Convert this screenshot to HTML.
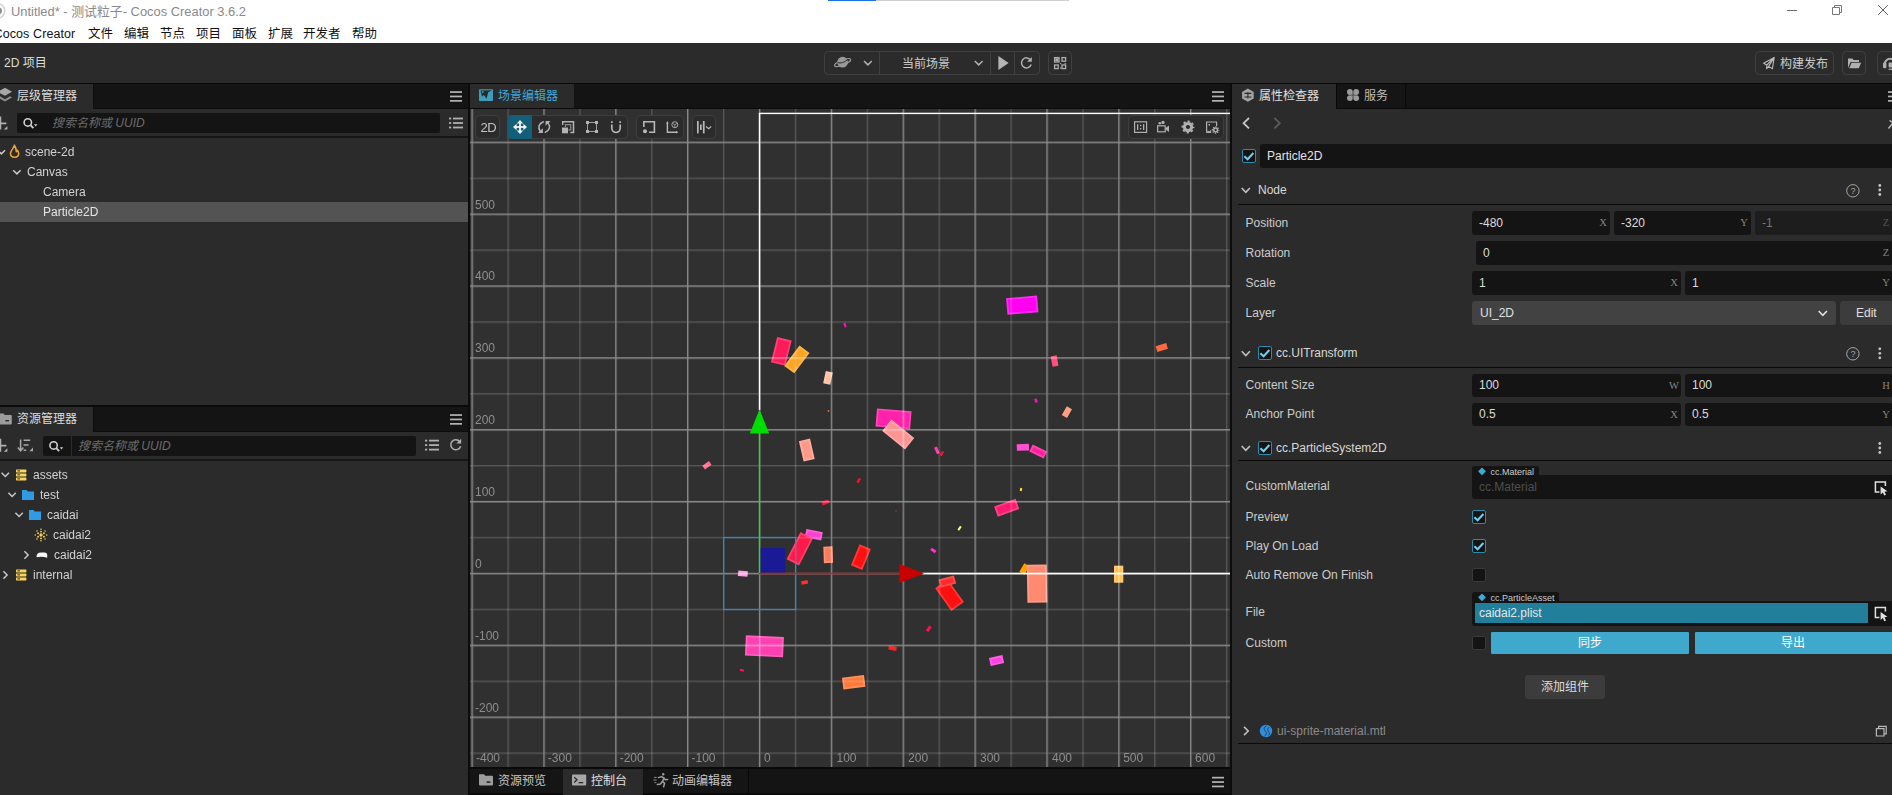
<!DOCTYPE html>
<html lang="zh-CN">
<head>
<meta charset="utf-8">
<title>Untitled* - 测试粒子- Cocos Creator 3.6.2</title>
<style>
html,body{margin:0;padding:0;background:#2b2b2b;}
body{width:1892px;height:795px;overflow:hidden;position:relative;font-family:"Liberation Sans","Noto Sans CJK SC",sans-serif;font-size:12px;color:#ccc;}
#app{position:absolute;left:0;top:0;width:1892px;height:795px;overflow:hidden;background:#2b2b2b;}
.abs{position:absolute;}
.t{position:absolute;white-space:nowrap;line-height:16px;height:16px;}
svg{position:absolute;overflow:visible;}
/* title + menu */
#titlebar{left:0;top:0;width:1892px;height:43px;background:#fff;}
#title{left:11px;top:4px;font-size:12.9px;color:#8a8a8a;}
.menu{top:26px;font-size:12.5px;color:#111;}
/* generic */
.tabbar{background:#141414;height:24px;}
.tab{background:#2b2b2b;height:24px;top:0;}
.inp{background:#141414;border-radius:2px;}
.row{position:absolute;left:0;height:20px;}
.lbl{position:absolute;white-space:nowrap;line-height:16px;color:#ccc;font-size:12px;}
.num{position:absolute;background:#141414;border-radius:2px;height:20px;}
.num span{position:absolute;left:7px;top:2px;line-height:16px;color:#ddd;}
.num i{position:absolute;right:3px;top:3px;font-style:normal;font-family:"Liberation Mono",monospace;font-size:11px;line-height:14px;color:#777;}
.cb{position:absolute;width:12px;height:12px;border:1px solid #227f9b;border-radius:2px;background:#141414;}
.cb0{position:absolute;width:12px;height:12px;border:1px solid #141414;border-radius:2px;background:#141414;}
.g,#scenesvg{will-change:transform;}
.hr{position:absolute;height:1px;background:#0a0a0a;}
.ax{position:absolute;white-space:nowrap;font-family:"Liberation Serif",serif;font-size:10.5px;color:#858585;width:10px;text-align:center;}
</style>
</head>
<body>
<div id="app">

<!-- ===== TITLE + MENU ===== -->
<div id="titlebar" class="abs">
  <div class="abs" style="left:828px;top:0;width:48px;height:1px;background:#1a73e8"></div>
  <div class="abs" style="left:876px;top:0;width:193px;height:1px;background:#d0d0d0"></div>
  <svg width="120" height="24" viewBox="1772 0 120 24" style="left:1772px;top:0">
    <path d="M1787,10.5 h10" stroke="#707070" stroke-width="1" fill="none"/>
    <path d="M1832.5,7.5 h7 v7 h-7z M1834.5,7.5 v-2 h7 v7 h-2" stroke="#787878" stroke-width="1" fill="none"/>
    <path d="M1878.2,5.2 l9.6,9.6 M1887.8,5.2 l-9.6,9.6" stroke="#606060" stroke-width="1" fill="none"/>
  </svg>
  <svg width="12" height="20" viewBox="0 0 12 20" style="left:0;top:0"><circle cx="-2.6" cy="10.8" r="7.4" fill="none" stroke="#d6d6d6" stroke-width="1.6"/><circle cx="-1.6" cy="10.8" r="3.6" fill="#8c8c8c"/></svg>
  <div id="title" class="t">Untitled* - 测试粒子- Cocos Creator 3.6.2</div>
  <div class="t menu" style="left:-6.5px;letter-spacing:0.1px">Cocos Creator</div>
  <div class="t menu" style="left:88px">文件</div>
  <div class="t menu" style="left:124px">编辑</div>
  <div class="t menu" style="left:160px">节点</div>
  <div class="t menu" style="left:196px">项目</div>
  <div class="t menu" style="left:232px">面板</div>
  <div class="t menu" style="left:268px">扩展</div>
  <div class="t menu" style="left:303px">开发者</div>
  <div class="t menu" style="left:352px">帮助</div>
</div>

<!-- ===== TOOLBAR ===== -->
<div id="toolbar" class="abs" style="left:0;top:43px;width:1892px;height:40px;background:#2b2b2b">
  <div class="t" style="left:4px;top:12px;font-size:12px;color:#ddd">2D 项目</div>
  <svg width="1892" height="40" viewBox="0 43 1892 40" style="left:0;top:0">
  <g fill="none" stroke="#404040" stroke-width="1">
    <rect x="824.5" y="51.5" width="215" height="23" rx="4"/>
    <path d="M879.5,52 v22 M990.5,52 v22 M1014.5,52 v22"/>
    <rect x="1048.5" y="51.5" width="23" height="23" rx="4"/>
    <rect x="1755.5" y="51.5" width="78" height="23" rx="4"/>
    <rect x="1842.5" y="51.5" width="23" height="23" rx="4"/>
    <rect x="1877.5" y="51.5" width="23" height="23" rx="4"/>
  </g>
  <!-- planet -->
  <circle cx="842.6" cy="62.2" r="5.4" fill="#9a9a9a"/>
  <ellipse cx="842.6" cy="62.6" rx="8.6" ry="2.3" fill="none" stroke="#9a9a9a" stroke-width="1.3" transform="rotate(-22 842.6 62.6)"/>
  <path d="M837.5,62.6 q5,1.6 10.4,-3.2" fill="none" stroke="#2b2b2b" stroke-width="1" />
  <!-- chevrons -->
  <path d="M864,61 l3.9,3.9 l3.9,-3.9 M974.8,61 l3.9,3.9 l3.9,-3.9" fill="none" stroke="#b0b0b0" stroke-width="1.5"/>
  <!-- play -->
  <polygon points="998.4,56 1008.6,63 998.4,70" fill="#b4b4b4"/>
  <!-- refresh -->
  <path d="M1030.6,60 a5,5 0 1 0 0.6,4.6" fill="none" stroke="#b0b0b0" stroke-width="1.5"/>
  <polygon points="1031.8,57 1031.8,61.8 1027,61.8" fill="#b0b0b0"/>
  <!-- qr -->
  <g fill="none" stroke="#b0b0b0" stroke-width="1.3">
    <rect x="1054.6" y="57.6" width="4.4" height="4.4"/><rect x="1062" y="57.6" width="3.6" height="3.6"/>
    <rect x="1054.6" y="65" width="3.6" height="3.6"/><rect x="1062" y="65" width="3.6" height="3.6"/>
  </g>
  <g fill="#b0b0b0"><rect x="1055.4" y="58.4" width="2.8" height="2.8"/><rect x="1060" y="63" width="1.2" height="1.2"/><rect x="1064.6" y="63" width="1.2" height="1.2"/><rect x="1060" y="67.4" width="1.2" height="1.2"/></g>
  <!-- paper plane -->
  <path d="M1763.6,63.2 L1774.2,57.4 L1772.4,68.8 L1768.6,66.4 L1766.6,68.6 L1766.8,65 Z M1766.8,65 L1774.2,57.4 M1768.6,66.4 L1774.2,57.4" fill="none" stroke="#b8b8b8" stroke-width="1.1" stroke-linejoin="round"/>
  <!-- folder -->
  <path d="M1848,68 v-9.4 h4.4 l1.2,1.4 h5.4 v2 h-8.4 l-2.6,6z" fill="#b0b0b0"/>
  <path d="M1849.2,68.2 l2.4,-5.4 h9.6 l-2.4,5.4z" fill="#b0b0b0"/>
  <!-- headset -->
  <path d="M1884.6,64.4 a5.6,5.6 0 0 1 11.2,0" fill="none" stroke="#b0b0b0" stroke-width="2"/>
  <rect x="1883" y="62.6" width="3.4" height="5.6" rx="1.2" fill="#b0b0b0"/>
  <rect x="1888.6" y="62.6" width="4" height="5" rx="1" fill="#b0b0b0"/>
  <rect x="1888.6" y="68.6" width="4" height="1.3" fill="#b0b0b0"/>
  </svg>
  <div class="t" style="left:902px;top:13px;font-size:12px;color:#ccc">当前场景</div>
  <div class="t" style="left:1780px;top:13px;font-size:12px;color:#ccc">构建发布</div>
</div>
<div class="abs" style="left:0;top:83px;width:1892px;height:1px;background:#080808"></div>

<!-- ===== LEFT: HIERARCHY ===== -->
<div id="hier" class="abs" style="left:0;top:84px;width:468px;height:321px;background:#2b2b2b">
  <div class="abs tabbar" style="left:0;top:0;width:468px"></div><div class="abs" style="left:93px;top:24px;width:375px;height:1px;background:#0d0d0d"></div><div class="abs" style="left:93px;top:0;width:1px;height:25px;background:#0d0d0d"></div>
  <div class="abs tab" style="left:0;width:93px"></div>
  <div class="t" style="left:17px;top:4px;font-size:12px;color:#ddd">层级管理器</div>
  <svg width="468" height="140" viewBox="0 84 468 140" style="left:0;top:0">
    <!-- layers icon -->
    <path d="M-2.5,91.8 l7.5,-4 l7,4 l-7,4z" fill="#a6a6a6"/>
    <path d="M-2.5,97.4 l2.2,-1.2 l5.3,3 l5,-3 l2,1.2 l-7,4.2z" fill="#8c8c8c"/>
    <!-- hamburger -->
    <g fill="#b4b4b4"><rect x="450" y="91.2" width="12" height="1.7"/><rect x="450" y="95.6" width="12" height="1.7"/><rect x="450" y="100" width="12" height="1.7"/></g>
    <!-- plus -->
    <path d="M-4,123.4 h10.4 M0.4,116.6 v13" stroke="#b0b0b0" stroke-width="1.7" fill="none"/>
    <polygon points="7.4,126 7.4,129.6 3.8,129.6" fill="#b0b0b0"/>
    <!-- list icon -->
    <g fill="#b0b0b0"><rect x="449" y="117.6" width="2.2" height="1.8"/><rect x="453" y="117.6" width="10" height="1.8"/><rect x="449" y="122.1" width="2.2" height="1.8"/><rect x="453" y="122.1" width="10" height="1.8"/><rect x="449" y="126.6" width="2.2" height="1.8"/><rect x="453" y="126.6" width="10" height="1.8"/></g>
  </svg>
  <div class="abs inp" style="left:17px;top:29px;width:423px;height:20px"></div>
  <svg width="30" height="20" viewBox="17 113 30 20" style="left:17px;top:29px">
    <circle cx="27.8" cy="122.4" r="3.7" fill="none" stroke="#d0d0d0" stroke-width="1.6"/>
    <path d="M30.4,125.2 l3,3" stroke="#d0d0d0" stroke-width="1.8" fill="none"/>
    <polygon points="34,124.2 37.4,124.2 35.7,126.4" fill="#d0d0d0"/>
  </svg>
  <div class="t" style="left:52px;top:31px;font-size:12px;font-style:italic;color:#6c6c6c">搜索名称或 UUID</div>
  <div class="abs" style="left:0;top:52px;width:468px;height:2px;background:#161616"></div>
  <!-- tree -->
  <div class="abs" style="left:0;top:118px;width:468px;height:20px;background:#535353"></div>
  <svg width="60" height="60" viewBox="0 142 60 60" style="left:0;top:58px">
    <path d="M-2,150.5 l3.4,3.4 l3.6,-3.6" stroke="#c8c8c8" stroke-width="1.5" fill="none"/>
    <path d="M14.4,145.2 C13.6,148.8 10.5,150.6 10.5,153.6 C10.5,156 12.3,157.3 14.6,157.3 C16.9,157.3 18.7,156 18.7,153.6 C18.7,152 18,151 17.4,150.2 C17.2,151 16.8,151.6 16.3,151.8 C16.3,149.2 15.6,146.8 14.4,145.2Z" fill="none" stroke="#f0a336" stroke-width="1.5" stroke-linejoin="round"/>
    <path d="M13.2,170.2 l3.7,3.7 l3.7,-3.7" stroke="#c8c8c8" stroke-width="1.5" fill="none"/>
  </svg>
  <div class="lbl g" style="left:25px;top:58px;line-height:20px;color:#d2d2d2">scene-2d</div>
  <div class="lbl g" style="left:27px;top:78px;line-height:20px;color:#d2d2d2">Canvas</div>
  <div class="lbl g" style="left:43px;top:98px;line-height:20px;color:#d2d2d2">Camera</div>
  <div class="lbl g" style="left:43px;top:118px;line-height:20px;color:#e4e4e4">Particle2D</div>
</div>

<!-- ===== LEFT: ASSETS ===== -->
<div id="assets" class="abs" style="left:0;top:407px;width:468px;height:388px;background:#2b2b2b">
  <div class="abs tabbar" style="left:0;top:0;width:468px"></div><div class="abs" style="left:93px;top:24px;width:375px;height:1px;background:#0d0d0d"></div><div class="abs" style="left:93px;top:0;width:1px;height:25px;background:#0d0d0d"></div>
  <div class="abs tab" style="left:0;width:93px"></div>
  <div class="t" style="left:17px;top:4px;font-size:12px;color:#ddd">资源管理器</div>
  <svg width="468" height="180" viewBox="0 407 468 180" style="left:0;top:0">
    <!-- folder tab icon -->
    <path d="M-2,413.4 h5.4 l1.4,1.6 h6 a1,1 0 0 1 1,1 v7.6 a1,1 0 0 1 -1,1 h-12.8z" fill="#9c9c9c"/>
    <rect x="5.4" y="420" width="3.6" height="1.4" fill="#2b2b2b"/>
    <!-- hamburger -->
    <g fill="#b4b4b4"><rect x="450" y="414.2" width="12" height="1.7"/><rect x="450" y="418.6" width="12" height="1.7"/><rect x="450" y="423" width="12" height="1.7"/></g>
    <!-- plus -->
    <path d="M-4,445.6 h10.4 M0.4,438.8 v13" stroke="#b0b0b0" stroke-width="1.7" fill="none"/>
    <polygon points="7.4,448.2 7.4,451.8 3.8,451.8" fill="#b0b0b0"/>
    <!-- sort icon -->
    <path d="M20.6,439.4 v11 M17.8,447.6 l2.8,3.2 l2.8,-3.2" stroke="#a8a8a8" stroke-width="1.5" fill="none"/>
    <path d="M23.6,440.2 h6.6 M23.6,445 h5 M23.6,450.2 h2.6" stroke="#a8a8a8" stroke-width="1.5" fill="none"/>
    <polygon points="33,447.6 33,451.2 29.4,451.2" fill="#a8a8a8"/>
    <!-- list icon -->
    <g fill="#b0b0b0"><rect x="425" y="439.7" width="2.2" height="1.8"/><rect x="429" y="439.7" width="10" height="1.8"/><rect x="425" y="444.2" width="2.2" height="1.8"/><rect x="429" y="444.2" width="10" height="1.8"/><rect x="425" y="448.7" width="2.2" height="1.8"/><rect x="429" y="448.7" width="10" height="1.8"/></g>
    <!-- refresh -->
    <path d="M459.8,441.8 a5,5 0 1 0 0.8,4.4" fill="none" stroke="#b0b0b0" stroke-width="1.5"/>
    <polygon points="461.2,438.8 461.2,443.6 456.4,443.6" fill="#b0b0b0"/>
  </svg>
  <div class="abs inp" style="left:43px;top:29px;width:373px;height:20px"></div>
  <div class="abs" style="left:71px;top:29px;width:1px;height:20px;background:#2b2b2b"></div>
  <svg width="30" height="20" viewBox="43 436 30 20" style="left:43px;top:29px">
    <circle cx="53.6" cy="445.4" r="3.7" fill="none" stroke="#d0d0d0" stroke-width="1.6"/>
    <path d="M56.2,448.2 l3,3" stroke="#d0d0d0" stroke-width="1.8" fill="none"/>
    <polygon points="59.8,447.2 63.2,447.2 61.5,449.4" fill="#d0d0d0"/>
  </svg>
  <div class="t" style="left:78px;top:31px;font-size:12px;font-style:italic;color:#6c6c6c">搜索名称或 UUID</div>
  <div class="abs" style="left:0;top:52px;width:468px;height:2px;background:#161616"></div>
  <!-- tree icons -->
  <svg width="70" height="125" viewBox="0 465 70 125" style="left:0;top:58px">
    <g stroke="#c8c8c8" stroke-width="1.5" fill="none">
      <path d="M1.6,472.8 l3.7,3.7 l3.7,-3.7"/>
      <path d="M8.4,492.8 l3.7,3.7 l3.7,-3.7"/>
      <path d="M15.4,512.8 l3.7,3.7 l3.7,-3.7"/>
      <path d="M24.4,551.3 l3.7,3.7 l-3.7,3.7"/>
      <path d="M3.4,571.3 l3.7,3.7 l-3.7,3.7"/>
    </g>
    <!-- db icons -->
    <g fill="#fbd45c">
      <rect x="16" y="469.4" width="10.4" height="3" rx=".6"/><rect x="16" y="473.4" width="10.4" height="3" rx=".6"/><rect x="16" y="477.4" width="10.4" height="3" rx=".6"/>
      <rect x="16" y="569.4" width="10.4" height="3" rx=".6"/><rect x="16" y="573.4" width="10.4" height="3" rx=".6"/><rect x="16" y="577.4" width="10.4" height="3" rx=".6"/>
    </g>
    <g fill="#2b2b2b">
      <rect x="17.4" y="470.4" width="2.6" height="1"/><rect x="17.4" y="474.4" width="2.6" height="1"/><rect x="17.4" y="478.4" width="2.6" height="1"/>
      <rect x="17.4" y="570.4" width="2.6" height="1"/><rect x="17.4" y="574.4" width="2.6" height="1"/><rect x="17.4" y="578.4" width="2.6" height="1"/>
    </g>
    <!-- folders -->
    <path d="M22,490 h4.4 l1.4,1.6 h6.2 v8.4 h-12z" fill="#2f9be4"/>
    <path d="M29,510 h4.4 l1.4,1.6 h6.2 v8.4 h-12z" fill="#2f9be4"/>
    <!-- particle icon -->
    <g fill="#f6cf58"><circle cx="41" cy="535" r="1.7"/><circle cx="43.94" cy="536.70" r=".95"/><circle cx="41.00" cy="538.40" r=".95"/><circle cx="38.06" cy="536.70" r=".95"/><circle cx="38.06" cy="533.30" r=".95"/><circle cx="41.00" cy="531.60" r=".95"/><circle cx="43.94" cy="533.30" r=".95"/><circle cx="46.70" cy="535.00" r=".8"/><circle cx="45.03" cy="539.03" r=".8"/><circle cx="41.00" cy="540.70" r=".8"/><circle cx="36.97" cy="539.03" r=".8"/><circle cx="35.30" cy="535.00" r=".8"/><circle cx="36.97" cy="530.97" r=".8"/><circle cx="41.00" cy="529.30" r=".8"/><circle cx="45.03" cy="530.97" r=".8"/></g>
    <!-- image thumb -->
    <path d="M36.6,557.2 q-0.6,-4.8 4.6,-4.8 h3.2 q2.8,0 2.8,2.6 v2.8 q-5,-1.8 -10.6,-0.6z" fill="#f8f8f8"/>
  </svg>
  <div class="lbl g" style="left:33px;top:58px;line-height:20px;color:#d2d2d2">assets</div>
  <div class="lbl g" style="left:40px;top:78px;line-height:20px;color:#d2d2d2">test</div>
  <div class="lbl g" style="left:47px;top:98px;line-height:20px;color:#d2d2d2">caidai</div>
  <div class="lbl g" style="left:53px;top:118px;line-height:20px;color:#d2d2d2">caidai2</div>
  <div class="lbl g" style="left:54px;top:138px;line-height:20px;color:#d2d2d2">caidai2</div>
  <div class="lbl g" style="left:33px;top:158px;line-height:20px;color:#d2d2d2">internal</div>
</div>

<!-- ===== SCENE ===== -->
<div id="scene" class="abs" style="left:470px;top:84px;width:760px;height:684px;background:#303030">
  <div class="abs tabbar" style="left:0;top:0;width:760px"></div>
  <div class="abs tab" style="left:0;width:104px"></div>
  <div class="t" style="left:28px;top:4px;font-size:12px;color:#3fa9d6">场景编辑器</div>
<svg width="16" height="14" viewBox="478 88 16 14" style="left:8px;top:4px"><rect x="479" y="89.2" width="14" height="11.8" rx=".8" fill="#3e9cbd"/><polygon points="480.6,90.6 492,90.2 488.2,92.2 486.6,98.8 483.8,95 482,96.8" fill="#2b2b2b"/><circle cx="482.8" cy="92" r=".9" fill="#3e9cbd"/></svg>
<svg width="14" height="14" viewBox="1211 89 14 14" style="left:741px;top:5px"><g fill="#b4b4b4"><rect x="1212" y="91.2" width="12" height="1.7"/><rect x="1212" y="95.6" width="12" height="1.7"/><rect x="1212" y="100" width="12" height="1.7"/></g></svg>
<div class="abs" style="left:0;top:24px;width:760px;height:1px;background:#0a0a0a"></div>
<svg id="scenesvg" width="760" height="658" viewBox="470 109 760 658" style="left:0;top:25px;overflow:hidden">
<defs>
<pattern id="grid" x="471.46" y="141.64" width="71.86" height="71.86" patternUnits="userSpaceOnUse">
<rect x="35.93" y="1.4" width="1.4" height="70.46" fill="#fff" fill-opacity=".18"/>
<rect x="1.4" y="35.93" width="70.46" height="1.4" fill="#fff" fill-opacity=".18"/>
<path d="M0,0 H71.86 V1.4 H1.4 V71.86 H0Z" fill="#fff" fill-opacity=".44"/>
</pattern>
</defs>
<rect x="470" y="109" width="760" height="658" fill="#303030"/>
<!-- particles -->
<rect x="-6.6" y="-12.1" width="13.2" height="24.2" fill="#ff1a5a" stroke="#ff4076" stroke-width="1.8" transform="translate(781.3 351.4) rotate(14)"/>
<rect x="-5.3" y="-11.9" width="10.7" height="23.7" fill="#ffa526" stroke="#ffb44a" stroke-width="1.8" transform="translate(796.8 359.4) rotate(36.7)"/>
<rect x="-2.7" y="-5.4" width="5.4" height="10.9" fill="#ffbfa0" stroke="#ffc9b0" stroke-width="1.8" transform="translate(828 377.8) rotate(12)"/>
<rect x="-1.0" y="-2.2" width="2" height="4.5" fill="#ff10c0" transform="translate(845 325) rotate(-15)"/>
<rect x="-0.8" y="-0.8" width="1.5" height="1.5" fill="#ff8030" transform="translate(828.5 411) rotate(0)"/>
<rect x="-16.5" y="-8.2" width="32.9" height="16.4" fill="#ff22aa" stroke="#ff47b8" stroke-width="1.8" transform="translate(893.6 418.9) rotate(4.6)"/>
<rect x="-13.8" y="-6.4" width="27.5" height="12.9" fill="#ff9494" stroke="#ffa6a6" stroke-width="1.8" transform="translate(898.3 434.5) rotate(38.8)"/>
<rect x="-4.8" y="-9.6" width="9.6" height="19.2" fill="#ff9a8a" stroke="#ffab9d" stroke-width="1.8" transform="translate(806.8 450.1) rotate(-13)"/>
<rect x="-4.0" y="-2.2" width="8" height="4.5" fill="#ff7090" transform="translate(706.9 465.2) rotate(-35)"/>
<rect x="-1.5" y="-3.5" width="3" height="7" fill="#ff40b0" transform="translate(936.9 450.4) rotate(-25)"/>
<rect x="-1.2" y="-2.5" width="2.5" height="5" fill="#ff1030" transform="translate(941.8 453.4) rotate(30)"/>
<rect x="-1.2" y="-2.5" width="2.5" height="5" fill="#ff1020" transform="translate(858.7 480.4) rotate(30)"/>
<rect x="-3.5" y="-1.9" width="7" height="3.8" fill="#ff1040" transform="translate(825.3 502.4) rotate(-20)"/>
<rect x="-0.6" y="-0.6" width="1.2" height="1.2" fill="#a03090" transform="translate(896 511) rotate(0)"/>
<rect x="-1.0" y="-2.2" width="2" height="4.5" fill="#ffff80" transform="translate(959.6 528.2) rotate(35)"/>
<rect x="-7.5" y="-3.3" width="15.0" height="6.7" fill="#ff3fcf" stroke="#ff5fd7" stroke-width="1.8" transform="translate(813.8 534.7) rotate(11.7)"/>
<rect x="-6.1" y="-14.3" width="12.2" height="28.7" fill="#ff1a4a" stroke="#ff4068" stroke-width="1.8" transform="translate(799.8 548.8) rotate(27)"/>
<rect x="-3.7" y="-7.3" width="7.4" height="14.7" fill="#ff7a5a" stroke="#ff9076" stroke-width="1.8" transform="translate(828.2 554.7) rotate(-2)"/>
<rect x="-5.3" y="-10.4" width="10.5" height="20.9" fill="#ff1010" stroke="#ff3838" stroke-width="1.8" transform="translate(861 557.1) rotate(22.5)"/>
<rect x="-2.8" y="-1.5" width="5.5" height="3" fill="#ff30d0" transform="translate(933.4 550.5) rotate(35)"/>
<rect x="-4.8" y="-2.8" width="9.6" height="5.5" fill="#ffa0e0" transform="translate(742.9 573.7) rotate(5)"/>
<rect x="-3.2" y="-1.8" width="6.5" height="3.5" fill="#ff3030" transform="translate(804.6 582.4) rotate(-10)"/>
<rect x="-6.8" y="-13.0" width="13.6" height="26.1" fill="#ff1010" stroke="#ff3838" stroke-width="1.8" transform="translate(949.5 595.1) rotate(-35.5)"/>
<rect x="-7.1" y="-3.3" width="14.2" height="6.6" fill="#ff2a2a" stroke="#ff4e4e" stroke-width="1.8" transform="translate(947.3 581.6) rotate(-15)"/>
<rect x="-1.5" y="-3.0" width="3" height="6" fill="#ff1050" transform="translate(928.8 628.8) rotate(35)"/>
<rect x="-4.0" y="-2.0" width="8" height="4" fill="#ff2020" transform="translate(892.6 648.3) rotate(10)"/>
<rect x="-18.2" y="-9.3" width="36.3" height="18.5" fill="#ff40b0" stroke="#ff60bd" stroke-width="1.8" transform="translate(764.5 646.4) rotate(2.6)"/>
<rect x="-2.0" y="-1.0" width="4" height="2" fill="#ff1060" transform="translate(741.9 670.3) rotate(15)"/>
<rect x="-10.2" y="-5.0" width="20.4" height="10.0" fill="#ff7a3a" stroke="#ff905b" stroke-width="1.8" transform="translate(853.7 682.2) rotate(-7.2)"/>
<rect x="-5.9" y="-3.2" width="11.9" height="6.4" fill="#ff40e0" stroke="#ff60e5" stroke-width="1.8" transform="translate(996.5 660.5) rotate(-12)"/>
<rect x="-14.7" y="-7.4" width="29.3" height="14.9" fill="#ff00f0" stroke="#ff2bf2" stroke-width="1.8" transform="translate(1022.3 305.1) rotate(-4.9)"/>
<rect x="-3.0" y="-5.2" width="6" height="10.5" fill="#ff5080" transform="translate(1054.6 361) rotate(-10)"/>
<rect x="-5.5" y="-3.0" width="11" height="6" fill="#ff6a40" transform="translate(1161.8 347.5) rotate(-17)"/>
<rect x="-1.2" y="-2.0" width="2.5" height="4" fill="#ff10c0" transform="translate(1035.9 400.6) rotate(-20)"/>
<rect x="-3.0" y="-5.0" width="6" height="10" fill="#ffa080" transform="translate(1066.9 412.1) rotate(30)"/>
<rect x="-6.1" y="-3.3" width="12.2" height="6.6" fill="#ff50d0" transform="translate(1022.9 447.3) rotate(-2)"/>
<rect x="-7.1" y="-3.0" width="14.2" height="6.0" fill="#ff20a0" stroke="#ff45b0" stroke-width="1.8" transform="translate(1038.2 451.5) rotate(26)"/>
<rect x="-1.0" y="-1.5" width="2" height="3" fill="#ffe040" transform="translate(1021 489.5) rotate(10)"/>
<rect x="-10.5" y="-4.6" width="21.0" height="9.1" fill="#ff1a70" stroke="#ff4088" stroke-width="1.8" transform="translate(1006.7 507.7) rotate(-19.8)"/>
<rect x="-3.0" y="-5.0" width="6" height="10" fill="#ffa000" transform="translate(1024.4 569) rotate(30)"/>
<rect x="-9.0" y="-18.1" width="18.1" height="36.2" fill="#ff8a70" stroke="#ff9d88" stroke-width="1.8" transform="translate(1037 583.6) rotate(-1)"/>
<rect x="-3.8" y="-7.6" width="7.5" height="15.2" fill="#ffc050" stroke="#ffca6d" stroke-width="1.8" transform="translate(1118.7 574.2) rotate(0)"/>
<rect x="470" y="109" width="760" height="658" fill="url(#grid)"/>
<g font-family="Liberation Sans, sans-serif" font-size="12" fill="#8e8e8e">
<text x="476.0" y="762">-400</text>
<text x="547.8" y="762">-300</text>
<text x="619.7" y="762">-200</text>
<text x="691.5" y="762">-100</text>
<text x="763.9" y="762">0</text>
<text x="836.5" y="762">100</text>
<text x="908.1" y="762">200</text>
<text x="980.0" y="762">300</text>
<text x="1052.0" y="762">400</text>
<text x="1123.2" y="762">500</text>
<text x="1195.1" y="762">600</text>
<text x="475" y="209">500</text>
<text x="475" y="280">400</text>
<text x="475" y="352">300</text>
<text x="475" y="424">200</text>
<text x="475" y="496">100</text>
<text x="475" y="568">0</text>
<text x="475" y="640">-100</text>
<text x="475" y="712">-200</text>
</g>
<!-- canvas outline -->
<rect x="758.8" y="113" width="1.5" height="297" fill="#fff"/>
<rect x="759" y="112.7" width="471" height="1.4" fill="#fff"/>
<rect x="922" y="572.75" width="308" height="1.6" fill="#fff"/>
<!-- gizmo -->
<rect x="723.6" y="537.5" width="72" height="72" fill="none" stroke="#0a94f0" stroke-width="1.2"/>
<rect x="760.5" y="548" width="24.6" height="24.6" fill="#1a1a96"/>
<rect x="758.85" y="430" width="1.3" height="144" fill="#00f800"/>
<polygon points="759.5,409.5 769.2,433.6 749.8,433.6" fill="#00dd00"/>
<rect x="759" y="572.85" width="142" height="1.3" fill="#ff0000"/>
<polygon points="899.3,563.9 924.2,573.5 899.3,583.1" fill="#c80000"/>
</svg>
<svg id="tools" width="760" height="40" viewBox="470 109 760 40" style="left:0;top:25px">
<g fill="#2b2b2b" stroke="#3e3e3e" stroke-width="1">
<rect x="475.5" y="115.5" width="24" height="23" rx="4"/>
<rect x="508.5" y="115.5" width="119" height="23" rx="4"/>
<rect x="636.5" y="115.5" width="47" height="23" rx="4"/>
<rect x="692.5" y="115.5" width="23" height="23" rx="4"/>
<rect x="1128.5" y="115.5" width="95" height="23" rx="4"/>
</g>
<path d="M512,115 h20 v24 h-20 a4,4 0 0 1 -4,-4 v-16 a4,4 0 0 1 4,-4z" fill="#135e78"/>
<text x="480.5" y="131.5" font-family="Liberation Sans, sans-serif" font-size="13" fill="#c4c4c4" letter-spacing="-0.6">2D</text>
<!-- move -->
<g fill="#f2f2f2">
<rect x="519.1" y="122.5" width="1.8" height="9"/><rect x="515.5" y="126.1" width="9" height="1.8"/>
<polygon points="520,120 523.2,123.6 516.8,123.6"/><polygon points="520,134 523.2,130.4 516.8,130.4"/>
<polygon points="513,127 516.6,123.8 516.6,130.2"/><polygon points="527,127 523.4,123.8 523.4,130.2"/>
</g>
<!-- rotate -->
<g fill="none" stroke="#b4b4b4" stroke-width="1.5">
<path d="M543.7,121.5 Q536.2,125 540.3,131.5"/><path d="M544.8,132.6 Q552.3,129 547.9,122.6"/>
</g>
<polygon points="538,133 542.9,133 542.9,128.2" fill="#b4b4b4"/>
<polygon points="550.5,121 545.6,121 545.6,125.8" fill="#b4b4b4"/>
<!-- scale -->
<path d="M562.7,125 v-3.2 h10.8 v10.8 h-3.2" fill="none" stroke="#b4b4b4" stroke-width="1.5"/>
<path d="M565.5,127 v-2.3 h5.2 v5.2 h-2.3" fill="none" stroke="#8a8a8a" stroke-width="1.2"/>
<rect x="562" y="127.5" width="6" height="5.8" fill="#b4b4b4"/>
<!-- rect -->
<rect x="587.5" y="122.5" width="9" height="9" fill="none" stroke="#a0a0a0" stroke-width="1"/>
<g fill="#b4b4b4"><rect x="586" y="121" width="3" height="3"/><rect x="595" y="121" width="3" height="3"/><rect x="586" y="130" width="3" height="3"/><rect x="595" y="130" width="3" height="3"/></g>
<!-- magnet -->
<path d="M611.8,124.5 v3.6 a4.2,4.4 0 0 0 8.4,0 v-3.6" fill="none" stroke="#b4b4b4" stroke-width="1.7"/>
<rect x="611" y="121.2" width="1.7" height="1.8" fill="#b4b4b4"/><rect x="619.3" y="121.2" width="1.7" height="1.8" fill="#b4b4b4"/>
<!-- pivot -->
<path d="M643.8,127 v-5.2 h10.6 v10.4 h-5.4" fill="none" stroke="#b8b8b8" stroke-width="1.6"/>
<circle cx="645" cy="131.2" r="2" fill="#b8b8b8"/>
<!-- local -->
<path d="M667.4,122.5 v9.8 h9.8" fill="none" stroke="#b8b8b8" stroke-width="1.4"/>
<polygon points="667.4,121 668.6,123.4 666.2,123.4" fill="#b8b8b8"/><polygon points="678.4,132.3 676,131.1 676,133.5" fill="#b8b8b8"/>
<circle cx="674.8" cy="124.7" r="3" fill="none" stroke="#a8a8a8" stroke-width="1"/>
<path d="M674.8,124.7 v3 M674.8,124.7 l-2.5,-1.5 M674.8,124.7 l2.5,-1.5" stroke="#a8a8a8" stroke-width=".8" fill="none"/>
<!-- align -->
<g fill="#b8b8b8"><rect x="697" y="121" width="1.7" height="12.4"/><rect x="700" y="124.5" width="1.7" height="5.5"/><rect x="702.9" y="121" width="1.7" height="12.4"/></g>
<path d="M706,126.5 l2.6,2.3 l2.6,-2.3" fill="none" stroke="#b8b8b8" stroke-width="1.2"/>
<g fill="none" stroke="#b0b0b0" stroke-width="1.2">
<rect x="1134.6" y="121.8" width="12" height="10.6"/>
<rect x="1157.6" y="125.8" width="7.6" height="6"/>
<path d="M1206.6,132.4 v-10.4 h10 v4"/>
</g>
<g fill="#b0b0b0">
<rect x="1137" y="124.2" width="1.3" height="5.8"/><rect x="1143" y="124.2" width="1.3" height="5.8"/>
<rect x="1140" y="124.8" width="1.3" height="1.4"/><rect x="1140" y="128" width="1.3" height="1.4"/>
<polygon points="1165.6,128 1169,125.6 1169,132 1165.6,129.6"/>
<circle cx="1159.8" cy="123.3" r="1.3"/><circle cx="1163" cy="122.4" r="1.7"/>
<path d="M1188,121.9 a5.1,5.1 0 1 0 0.01,0z M1188,124.9 a2.1,2.1 0 1 1 -0.01,0z" fill-rule="evenodd"/>
<circle cx="1188" cy="127" r="5.6" fill="none" stroke="#b0b0b0" stroke-width="1.7" stroke-dasharray="2.3 2.098" stroke-dashoffset="1.15"/>
<path d="M1215.6,127.3 a2.7,2.7 0 1 0 0.01,0z M1215.6,128.8 a1.2,1.2 0 1 1 -0.01,0z" fill-rule="evenodd"/>
<circle cx="1215.6" cy="130" r="3.1" fill="none" stroke="#b0b0b0" stroke-width="1.2" stroke-dasharray="1.3 1.1347" stroke-dashoffset=".65"/>
<rect x="1208.6" y="124" width="1.4" height="1.6"/>
<polygon points="1206,133 1211.2,133 1211.2,129.6 1209.4,131.4 1208,130.4"/>
</g>
</svg>
</div>

<!-- ===== BOTTOM TABS ===== -->
<div id="bottom" class="abs" style="left:470px;top:767px;width:760px;height:28px;background:#141414;border-top:2px solid #0a0a0a;box-sizing:border-box">
  <div class="abs" style="left:0;top:0;width:93px;height:26px;background:#151515"></div>
  <div class="abs" style="left:93px;top:0;width:80px;height:26px;background:#2b2b2b"></div>
  <div class="abs" style="left:173px;top:0;width:106px;height:26px;background:#151515;border-right:1px solid #080808;box-sizing:border-box"></div>
  <div class="abs" style="left:0;top:24px;width:93px;height:2px;background:#0a0a0a"></div><div class="abs" style="left:173px;top:24px;width:587px;height:2px;background:#0a0a0a"></div>
  <svg width="760" height="26" viewBox="470 769 760 26" style="left:0;top:0">
    <!-- folder -->
    <path d="M479,774.2 h5 l1.4,1.6 h6.6 a1,1 0 0 1 1,1 v7.6 a1,1 0 0 1 -1,1 h-12 a1,1 0 0 1 -1,-1z" fill="#9c9c9c"/>
    <rect x="486.6" y="781.4" width="3.8" height="1.4" fill="#171717"/>
    <!-- terminal -->
    <rect x="572" y="774.4" width="14.2" height="11" rx="1" fill="#a8a8a8"/>
    <path d="M574.2,777.2 l2.8,2.6 l-2.8,2.6" stroke="#2b2b2b" stroke-width="1.3" fill="none"/>
    <rect x="578.6" y="782" width="4.6" height="1.3" fill="#2b2b2b"/>
    <!-- run -->
    <g fill="none" stroke="#a0a0a0" stroke-width="1.5" stroke-linecap="round" stroke-linejoin="round">
      <circle cx="663.2" cy="774.2" r="1.2" fill="#a0a0a0" stroke="none"/>
      <path d="M658.4,777.6 l3.2,-1 l2.4,1.6 l-1.6,3.4 l2.2,1.6 l-1,3.6"/>
      <path d="M662.4,781.6 l-2,2.4 l-3,0.6"/>
      <path d="M664,778.2 l1.4,1.6 l2.2,-0.2"/>
    </g>
    <path d="M654,777.4 h2.6 M653.4,780 h3.2 M654.4,782.6 h2" stroke="#8a8a8a" stroke-width="1" fill="none"/>
    <!-- hamburger -->
    <g fill="#b4b4b4"><rect x="1212" y="776.8" width="12" height="1.7"/><rect x="1212" y="781.2" width="12" height="1.7"/><rect x="1212" y="785.6" width="12" height="1.7"/></g>
  </svg>
  <div class="t" style="left:28px;top:4px;font-size:12px;color:#c4c4c4">资源预览</div>
  <div class="t" style="left:121px;top:4px;font-size:12px;color:#e0e0e0">控制台</div>
  <div class="t" style="left:202px;top:4px;font-size:12px;color:#c4c4c4">动画编辑器</div>
</div>

<!-- ===== INSPECTOR ===== -->
<div id="insp" class="abs" style="left:1232px;top:84px;width:660px;height:711px;background:#2b2b2b;overflow:hidden">
<div class="abs" style="left:-1232px;top:-84px;width:1892px;height:795px">
<div class="abs tabbar" style="left:1232px;top:84px;width:660px"></div><div class="abs" style="left:1336px;top:108px;width:556px;height:1px;background:#0a0a0a"></div>
<div class="abs tab" style="left:1232px;top:84px;width:104px"></div>
<div class="abs tab" style="left:1336px;top:84px;width:70px;background:#151515;border-left:1px solid #080808;border-right:1px solid #080808;box-sizing:border-box"></div>
<div class="t" style="left:1259px;top:88px;font-size:12px;color:#e0e0e0">属性检查器</div>
<div class="t" style="left:1364px;top:88px;font-size:12px;color:#bdbdbd">服务</div>
<div class="abs" style="left:1242px;top:149px;width:14px;height:14px;box-sizing:border-box;border:1px solid #2a8db0;border-radius:2px;background:#141414"></div><svg width="14" height="14" viewBox="0 0 14 14" style="left:1242px;top:149px"><path d="M2.4,7.2 l3.2,3.1 l5.8,-6.3" fill="none" stroke="#6fd0f0" stroke-width="2"/></svg>
<div class="abs" style="left:1260px;top:144px;width:640px;height:24px;background:#141414;border-radius:3px"></div>
<div class="lbl" style="left:1267px;top:144px;line-height:24px;color:#e4e4e4">Particle2D</div>
<div class="lbl" style="left:1258px;top:178px;line-height:24px;color:#d8d8d8">Node</div>
<div class="hr" style="left:1238px;top:204px;width:660px"></div>
<div class="lbl" style="left:1245.6px;top:211px;line-height:24px;color:#ccc">Position</div>
<div class="abs" style="left:1472px;top:211px;width:138px;height:24px;background:#141414;border-radius:3px"></div><div class="lbl" style="left:1479px;top:211px;line-height:24px;color:#dcdcdc">-480</div><div class="ax" style="left:1598px;top:211px;line-height:24px;color:#858585">X</div>
<div class="abs" style="left:1614px;top:211px;width:137px;height:24px;background:#141414;border-radius:3px"></div><div class="lbl" style="left:1621px;top:211px;line-height:24px;color:#dcdcdc">-320</div><div class="ax" style="left:1739px;top:211px;line-height:24px;color:#858585">Y</div>
<div class="abs" style="left:1755px;top:211px;width:138px;height:24px;background:#1d1d1d;border-radius:3px"></div><div class="lbl" style="left:1762px;top:211px;line-height:24px;color:#777">-1</div><div class="ax" style="left:1881px;top:211px;line-height:24px;color:#555">Z</div>
<div class="lbl" style="left:1245.6px;top:241px;line-height:24px;color:#ccc">Rotation</div>
<div class="abs" style="left:1476px;top:241px;width:417px;height:24px;background:#141414;border-radius:3px"></div><div class="lbl" style="left:1483px;top:241px;line-height:24px;color:#dcdcdc">0</div><div class="ax" style="left:1881px;top:241px;line-height:24px;color:#858585">Z</div>
<div class="lbl" style="left:1245.6px;top:271px;line-height:24px;color:#ccc">Scale</div>
<div class="abs" style="left:1472px;top:271px;width:209px;height:24px;background:#141414;border-radius:3px"></div><div class="lbl" style="left:1479px;top:271px;line-height:24px;color:#dcdcdc">1</div><div class="ax" style="left:1669px;top:271px;line-height:24px;color:#858585">X</div>
<div class="abs" style="left:1685px;top:271px;width:208px;height:24px;background:#141414;border-radius:3px"></div><div class="lbl" style="left:1692px;top:271px;line-height:24px;color:#dcdcdc">1</div><div class="ax" style="left:1881px;top:271px;line-height:24px;color:#858585">Y</div>
<div class="lbl" style="left:1245.6px;top:301px;line-height:24px;color:#ccc">Layer</div>
<div class="abs" style="left:1472px;top:301px;width:364px;height:24px;background:#424242;border-radius:3px"></div>
<div class="lbl" style="left:1480px;top:301px;line-height:24px;color:#e0e0e0">UI_2D</div>
<div class="abs" style="left:1840px;top:301px;width:60px;height:24px;background:#3c3c3c;border-radius:3px"></div>
<div class="lbl" style="left:1856px;top:301px;line-height:24px;color:#e0e0e0">Edit</div>
<div class="abs" style="left:1258px;top:346px;width:14px;height:14px;box-sizing:border-box;border:1px solid #2a8db0;border-radius:2px;background:#141414"></div><svg width="14" height="14" viewBox="0 0 14 14" style="left:1258px;top:346px"><path d="M2.4,7.2 l3.2,3.1 l5.8,-6.3" fill="none" stroke="#6fd0f0" stroke-width="2"/></svg>
<div class="lbl" style="left:1276px;top:341px;line-height:24px;color:#d8d8d8">cc.UITransform</div>
<div class="hr" style="left:1238px;top:367px;width:660px"></div>
<div class="lbl" style="left:1245.6px;top:373px;line-height:24px;color:#ccc">Content Size</div>
<div class="abs" style="left:1472px;top:374px;width:209px;height:23px;background:#141414;border-radius:3px"></div><div class="lbl" style="left:1479px;top:374px;line-height:23px;color:#dcdcdc">100</div><div class="ax" style="left:1669px;top:374px;line-height:23px;color:#858585">W</div>
<div class="abs" style="left:1685px;top:374px;width:208px;height:23px;background:#141414;border-radius:3px"></div><div class="lbl" style="left:1692px;top:374px;line-height:23px;color:#dcdcdc">100</div><div class="ax" style="left:1881px;top:374px;line-height:23px;color:#858585">H</div>
<div class="lbl" style="left:1245.6px;top:402px;line-height:24px;color:#ccc">Anchor Point</div>
<div class="abs" style="left:1472px;top:403px;width:209px;height:23px;background:#141414;border-radius:3px"></div><div class="lbl" style="left:1479px;top:403px;line-height:23px;color:#dcdcdc">0.5</div><div class="ax" style="left:1669px;top:403px;line-height:23px;color:#858585">X</div>
<div class="abs" style="left:1685px;top:403px;width:208px;height:23px;background:#141414;border-radius:3px"></div><div class="lbl" style="left:1692px;top:403px;line-height:23px;color:#dcdcdc">0.5</div><div class="ax" style="left:1881px;top:403px;line-height:23px;color:#858585">Y</div>
<div class="abs" style="left:1258px;top:441px;width:14px;height:14px;box-sizing:border-box;border:1px solid #2a8db0;border-radius:2px;background:#141414"></div><svg width="14" height="14" viewBox="0 0 14 14" style="left:1258px;top:441px"><path d="M2.4,7.2 l3.2,3.1 l5.8,-6.3" fill="none" stroke="#6fd0f0" stroke-width="2"/></svg>
<div class="lbl" style="left:1276px;top:436px;line-height:24px;color:#d8d8d8">cc.ParticleSystem2D</div>
<div class="hr" style="left:1238px;top:460px;width:660px"></div>
<div class="lbl" style="left:1245.6px;top:474px;line-height:24px;color:#ccc">CustomMaterial</div>
<div class="abs" style="left:1472px;top:475px;width:428px;height:24px;background:#141414;border-radius:3px"></div>
<div class="abs" style="left:1472px;top:466px;width:67px;height:11px;background:#141414;border-radius:3px 3px 0 0"></div>
<div class="lbl" style="left:1490.5px;top:466.5px;font-size:9px;line-height:11px;color:#ccc">cc.Material</div>
<div class="lbl" style="left:1479px;top:475px;line-height:24px;color:#4e4e4e">cc.Material</div>
<div class="lbl" style="left:1245.6px;top:505px;line-height:24px;color:#ccc">Preview</div>
<div class="abs" style="left:1472px;top:510px;width:14px;height:14px;box-sizing:border-box;border:1px solid #2a8db0;border-radius:2px;background:#141414"></div><svg width="14" height="14" viewBox="0 0 14 14" style="left:1472px;top:510px"><path d="M2.4,7.2 l3.2,3.1 l5.8,-6.3" fill="none" stroke="#6fd0f0" stroke-width="2"/></svg>
<div class="lbl" style="left:1245.6px;top:534px;line-height:24px;color:#ccc">Play On Load</div>
<div class="abs" style="left:1472px;top:539px;width:14px;height:14px;box-sizing:border-box;border:1px solid #2a8db0;border-radius:2px;background:#141414"></div><svg width="14" height="14" viewBox="0 0 14 14" style="left:1472px;top:539px"><path d="M2.4,7.2 l3.2,3.1 l5.8,-6.3" fill="none" stroke="#6fd0f0" stroke-width="2"/></svg>
<div class="lbl" style="left:1245.6px;top:563px;line-height:24px;color:#ccc">Auto Remove On Finish</div>
<div class="abs" style="left:1472px;top:568px;width:14px;height:14px;border-radius:2px;background:#141414;box-sizing:border-box;border:1px solid #3a3a3a"></div>
<div class="lbl" style="left:1245.6px;top:600px;line-height:24px;color:#ccc">File</div>
<div class="abs" style="left:1472px;top:601px;width:428px;height:25px;background:#141414;border-radius:3px"></div>
<div class="abs" style="left:1475px;top:603px;width:393px;height:20px;background:#227f9b"></div>
<div class="abs" style="left:1472px;top:592px;width:87px;height:11px;background:#141414;border-radius:3px 3px 0 0"></div>
<div class="lbl" style="left:1490.5px;top:592.5px;font-size:9px;line-height:11px;color:#ccc">cc.ParticleAsset</div>
<div class="lbl" style="left:1479px;top:601px;line-height:24px;color:#e6e6e6">caidai2.plist</div>
<div class="lbl" style="left:1245.6px;top:631px;line-height:24px;color:#ccc">Custom</div>
<div class="abs" style="left:1472px;top:636px;width:14px;height:14px;border-radius:2px;background:#141414;box-sizing:border-box;border:1px solid #3a3a3a"></div>
<div class="abs" style="left:1491px;top:632px;width:198px;height:22px;background:#3fa9cd;border-radius:1px"></div>
<div class="abs" style="left:1695px;top:632px;width:205px;height:22px;background:#3fa9cd;border-radius:1px"></div>
<div class="lbl" style="left:1578px;top:632px;line-height:22px;color:#fff">同步</div>
<div class="lbl" style="left:1781px;top:632px;line-height:22px;color:#fff">导出</div>
<div class="abs" style="left:1525px;top:675px;width:80px;height:24px;background:#3c3c3c;border-radius:3px"></div>
<div class="lbl" style="left:1541px;top:675px;line-height:24px;color:#dcdcdc">添加组件</div>
<div class="lbl" style="left:1277px;top:719px;line-height:24px;color:#8a8a8a">ui-sprite-material.mtl</div>
<div class="hr" style="left:1238px;top:743px;width:660px"></div>
<svg width="1892" height="795" viewBox="0 0 1892 795" style="left:0;top:0"><path d="M1247.9,88.6 l5.8,3.3 v6.6 l-5.8,3.3 l-5.8,-3.3 v-6.6z" fill="#a4a4a4"/>
<path d="M1244.4,93.4 h7 M1244.4,97 h7 M1247.9,92 v6.6" stroke="#2b2b2b" stroke-width="1.1" fill="none"/>
<rect x="1351" y="93" width="4.2" height="4.2" fill="#5c5c5c"/><g fill="#9a9a9a"><circle cx="1349.9" cy="92" r="2.9"/><circle cx="1356.2" cy="92" r="2.9"/><circle cx="1349.9" cy="98.1" r="2.9"/><circle cx="1356.2" cy="98.1" r="2.9"/></g>
<g fill="#b4b4b4"><rect x="1888" y="91.2" width="12" height="1.7"/><rect x="1888" y="95.6" width="12" height="1.7"/><rect x="1888" y="100" width="12" height="1.7"/></g>
<path d="M1249,118 l-5.4,5.2 l5.4,5.2" fill="none" stroke="#c8c8c8" stroke-width="1.8"/>
<path d="M1274.4,118 l5.4,5.2 l-5.4,5.2" fill="none" stroke="#5c5c5c" stroke-width="1.8"/>
<path d="M1888.4,128.6 l5,-6 M1889.6,120.4 l3.6,2.6" fill="none" stroke="#b0b0b0" stroke-width="1.6"/>
<path d="M1241.7,188 l4.1,4.3 l4.1,-4.3" fill="none" stroke="#c0c0c0" stroke-width="1.6"/>
<circle cx="1852.9" cy="190.8" r="6.2" fill="none" stroke="#a8a8a8" stroke-width="1"/><text x="1852.9" y="194.0" text-anchor="middle" font-family="Liberation Sans, sans-serif" font-size="9" fill="#a8a8a8">?</text>
<circle cx="1879.8" cy="185.5" r="1.4" fill="#c4c4c4"/><circle cx="1879.8" cy="190" r="1.4" fill="#c4c4c4"/><circle cx="1879.8" cy="194.5" r="1.4" fill="#c4c4c4"/>
<path d="M1241.7,351.3 l4.1,4.3 l4.1,-4.3" fill="none" stroke="#c0c0c0" stroke-width="1.6"/>
<circle cx="1852.9" cy="353.8" r="6.2" fill="none" stroke="#a8a8a8" stroke-width="1"/><text x="1852.9" y="357.0" text-anchor="middle" font-family="Liberation Sans, sans-serif" font-size="9" fill="#a8a8a8">?</text>
<circle cx="1879.8" cy="348.8" r="1.4" fill="#c4c4c4"/><circle cx="1879.8" cy="353.3" r="1.4" fill="#c4c4c4"/><circle cx="1879.8" cy="357.8" r="1.4" fill="#c4c4c4"/>
<path d="M1241.7,446 l4.1,4.3 l4.1,-4.3" fill="none" stroke="#c0c0c0" stroke-width="1.6"/>
<circle cx="1879.8" cy="443.5" r="1.4" fill="#c4c4c4"/><circle cx="1879.8" cy="448" r="1.4" fill="#c4c4c4"/><circle cx="1879.8" cy="452.5" r="1.4" fill="#c4c4c4"/>
<path d="M1818.7,311 l4.1,4.3 l4.1,-4.3" fill="none" stroke="#e0e0e0" stroke-width="1.6"/>
<path d="M1885.4,486 v-4 h-10 v10 h4" fill="none" stroke="#e0e0e0" stroke-width="1.5"/><path d="M1880.6,486.4 l6.8,4.8 l-2.9,0.5 l1.5,3.1 l-1.7,0.8 l-1.5,-3.1 l-2.2,1.9z" fill="#e0e0e0"/>
<path d="M1885.4,611.6 v-4 h-10 v10 h4" fill="none" stroke="#e0e0e0" stroke-width="1.5"/><path d="M1880.6,612.0 l6.8,4.8 l-2.9,0.5 l1.5,3.1 l-1.7,0.8 l-1.5,-3.1 l-2.2,1.9z" fill="#e0e0e0"/>
<path d="M1244,726.9 l4.2,4.1 l-4.2,4.1" fill="none" stroke="#c0c0c0" stroke-width="1.6"/>
<circle cx="1266" cy="731" r="6.2" fill="#2f8fdc"/><path d="M1266.8,725.6 q-4.6,2.4 -1.4,5.6 q2.6,2.6 -1.2,5.2 M1269.2,727 q-3,2.2 -0.6,4.6 q1.8,2 0,4" stroke="#1a4a7a" stroke-width="1" fill="none"/>
<path d="M1876.4,728.6 h7.6 v7.4 h-7.6z M1878.6,728.6 v-2.2 h7.6 v7.4 h-2.2" fill="none" stroke="#b8b8b8" stroke-width="1.2"/>
<path d="M1482,467.4 l3.9,3.9 l-3.9,3.9 l-3.9,-3.9z M1482,593.4 l3.9,3.9 l-3.9,3.9 l-3.9,-3.9z" fill="#3fa9d6"/></svg>
</div>
</div>

<!-- dividers -->
<div class="abs" style="left:468px;top:84px;width:2px;height:711px;background:#0c0c0c"></div>
<div class="abs" style="left:1230px;top:84px;width:2px;height:711px;background:#0c0c0c"></div>
<div class="abs" style="left:0;top:405px;width:468px;height:2px;background:#0a0a0a"></div>

</div>
</body>
</html>
